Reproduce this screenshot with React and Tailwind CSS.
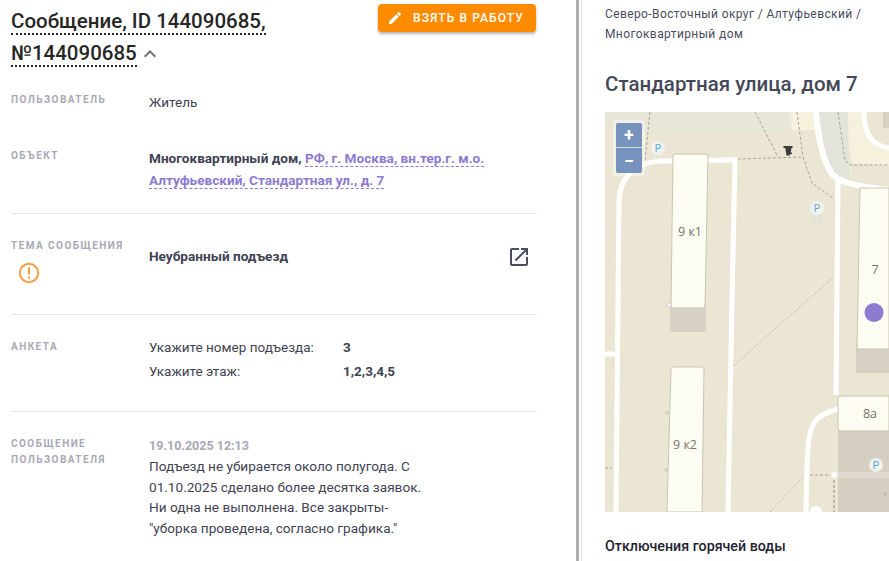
import React from "react";

const Label = ({ children, className = "" }) => (
  <div className={`w-[138px] shrink-0 text-[10px] leading-[16px] font-bold tracking-[0.145em] uppercase text-[#a9a9b6] ${className}`}>{children}</div>
);

const Dash = ({ d, w = 1, c = "#a9a594", da = "3 2" }) => (
  <path d={d} fill="none" stroke={c} strokeWidth={w} strokeDasharray={da} />
);
const Road = ({ d, w = 5 }) => <path d={d} fill="none" stroke="#ffffff" strokeWidth={w} />;
const Parking = ({ x, y }) => (
  <g>
    <circle cx={x} cy={y} r="7" fill="#f2f2ec" />
    <text x={x} y={y + 3.5} textAnchor="middle" fontSize="10" fontFamily="Roboto" fill="#5aa9e6">P</text>
  </g>
);
const Label2 = ({ x, y, children }) => (
  <text x={x} y={y} textAnchor="middle" fontSize="12.5" fontFamily="Open Sans" fill="#77756c">{children}</text>
);

function MapArt() {
  return (
    <svg viewBox="605 112 284 400" className="block w-full h-full">
      <rect x="605" y="112" width="284" height="400" fill="#ebe6d3" />
      <path d="M605 112H790V130H648L605 122Z" fill="#e8e6d9" />
      <path d="M789 112H812L816 130H792Z" fill="#f5f1dd" />
      <path d="M818 112H848L849 178L849 187L838 180L826 160Z" fill="#e3e3dc" />
      <path d="M848 112H862L863 127L873 143L889 148V166L852 163L849 150Z" fill="#f5f1dd" />
      <path d="M883 112H889V128H883Z" fill="#d6d1c0" />
      <rect x="812" y="214" width="10" height="9" fill="#e3e3da" />

      <Road d="M616 512L619 200C620 180 632 163 660 161L735 160L732 300L728 512" w={5} />
      <Road d="M605 354H615" w={5} />
      <Road d="M816 112C817 125 819 137 821 147C824 158 827 167 832 174C838 181 848 185 889 190" w={6} />
      <Road d="M864 112C864 125 866 133 872 140C877 145 882 147 889 148" w={5} />
      <Road d="M838 178L836 395" w={5} />
      <Road d="M838 409C822 414 814 418 811 430C808 440 807 450 806 512" w={5} />

      <Dash d="M650 112L645 160" />
      <Dash d="M755 112L778 157" />
      <Dash d="M797 112L803 157" />
      <Dash d="M803 157L812 183L833 198" />
      <Dash d="M738 159L803 157" />
      <Dash d="M838 112L845 160L850 165H889" />
      <path d="M733 366L835 276" fill="none" stroke="#b5b1a0" strokeWidth="0.8" strokeDasharray="2 1.5" />
      <path d="M770 512L803 477" fill="none" stroke="#b5b1a0" strokeWidth="0.8" strokeDasharray="2 1.5" />
      <Dash d="M605 468H612" />
      <Dash d="M810 475H834" w={1.4} c="#bdb8a6" da="3 2" />
      <Dash d="M834 475V512" w={1.4} c="#a9a594" da="3 2" />

      <rect x="670" y="300" width="36" height="32" rx="2" fill="#d6d1c2" />
      <path d="M673 156Q673 154 675 154H706Q708 154 708 156L705 308H671Z" fill="#fdfcf2" stroke="#c9c4b2" strokeWidth="1" />
      <path d="M671 369Q671 367 673 367H702Q704 367 704 369L702 512H667Z" fill="#fdfcf2" stroke="#c9c4b2" strokeWidth="1" />
      <circle cx="669" cy="305" r="2" fill="#fff" stroke="#bbb" strokeWidth=".6" />
      <circle cx="667" cy="413" r="2" fill="#d6d1c2" />
      <circle cx="666" cy="470" r="2" fill="#d6d1c2" />

      <rect x="856" y="340" width="40" height="33" rx="2" fill="#d6d1c2" />
      <path d="M860 188H889V349H857Z" fill="#fdfcf2" stroke="#c9c4b2" strokeWidth="1" />
      <rect x="838" y="428" width="51" height="84" fill="#d4cfc1" />
      <rect x="838" y="472" width="51" height="6" fill="#dedad0" />
      <path d="M838 399Q838 396 841 396H889V431H841Q838 431 838 428Z" fill="#fdfcf2" stroke="#c9c4b2" strokeWidth="1" />
      <circle cx="834" cy="475" r="3" fill="#ffffff" />
      <circle cx="885" cy="494" r="2" fill="#c4bfae" />
      <path d="M810 512A6 6 0 0 1 822 512Z" fill="#fff" />

      <Label2 x="690" y="236">9 к1</Label2>
      <Label2 x="685" y="449">9 к2</Label2>
      <Label2 x="875" y="274">7</Label2>
      <Label2 x="870" y="418">8а</Label2>

      <Parking x={658} y={148} />
      <Parking x={817} y={208} />
      <Parking x={876} y={465} />

      <path d="M783.5 146H792.5V148H791.5L790.7 152.5H792V154L790 154.3L789.5 155.5H786.5L785.3 148H783.5Z" fill="#3d3d3d" />
      <circle cx="874" cy="312.5" r="9.5" fill="#8d7bd0" />
    </svg>
  );
}

export default function App() {
  return (
    <div className="flex h-[561px] w-[889px] overflow-hidden bg-white font-['Roboto',sans-serif] text-[13.5px] text-[#3f4354]">
      <div className="w-[576px] shrink-0 pl-[11px] pr-[39px]">
        <div className="flex items-start justify-between">
          <h1 className="w-[330px] pt-[5px] text-[20.5px] leading-[32px] font-medium text-[#262626]">
            <span className="border-b-2 border-dotted border-[#262626]">Сообщение, ID 144090685, №144090685</span>
            <svg viewBox="0 0 24 24" className="ml-[1px] inline-block h-6 w-6 align-[-6px] fill-[#6f6f6f]">
              <path d="M7.41 15.41L12 10.83l4.59 4.58L18 14l-6-6-6 6z" />
            </svg>
          </h1>
          <button className="mt-[4px] mr-[1px] flex h-[28px] w-[158px] items-center rounded-[4px] bg-[#ff8c00] pl-[9px] text-[12px] font-medium tracking-[0.09em] text-white shadow-[0_2px_3px_rgba(0,0,0,0.3)]">
            <svg viewBox="0 0 24 24" className="mr-[10px] h-[16px] w-[16px] fill-white">
              <path d="M3 17.25V21h3.75L17.81 9.94l-3.75-3.75L3 17.25zM20.71 7.04c.39-.39.39-1.02 0-1.41l-2.34-2.34c-.39-.39-1.02-.39-1.41 0l-1.83 1.83 3.75 3.75 1.83-1.83z" />
            </svg>
            ВЗЯТЬ В РАБОТУ
          </button>
        </div>

        <div className="mt-[22px] flex h-[56px]">
          <Label className="mt-[1px]">Пользователь</Label>
          <div className="leading-[22px]">Житель</div>
        </div>

        <div className="flex h-[66px]">
          <Label className="mt-[1px]">Объект</Label>
          <div className="w-[350px] text-[13.6px] leading-[22px] font-bold">
            Многоквартирный дом,{" "}
            <span className="border-b border-dashed border-[#8d7bd0] text-[#8d7bd0]">РФ, г. Москва, вн.тер.г. м.о. Алтуфьевский, Стандартная ул., д. 7</span>
          </div>
        </div>

        <div className="flex h-[101px] border-t border-[#e3e3e6] pt-[24px]">
          <div className="w-[138px] shrink-0">
            <Label>Тема сообщения</Label>
            <svg viewBox="0 0 22 22" className="mt-[8px] ml-[7px] h-[22px] w-[22px]">
              <circle cx="11" cy="11" r="9.2" fill="none" stroke="#ff9c3f" strokeWidth="2" />
              <rect x="10" y="5.5" width="2" height="7" fill="#ff9c3f" />
              <rect x="10" y="14.5" width="2" height="2" fill="#ff9c3f" />
            </svg>
          </div>
          <div className="mt-[8px] flex-1 text-[13.6px] leading-[20px] font-bold">Неубранный подъезд</div>
          <svg viewBox="0 0 24 24" className="mt-[7px] mr-[6px] h-6 w-6 fill-[#4a4d5c]">
            <path d="M19 19H5V5h7V3H5c-1.11 0-2 .9-2 2v14c0 1.1.89 2 2 2h14c1.1 0 2-.9 2-2v-7h-2v7zM14 3v2h3.59l-9.83 9.83 1.41 1.41L19 6.41V10h2V3h-7z" />
          </svg>
        </div>

        <div className="flex h-[97px] border-t border-[#e3e3e6] pt-[22px]">
          <Label className="mt-[2px]">Анкета</Label>
          <div className="grid grid-cols-[194px_auto] content-start gap-y-[4px] leading-[20px]">
            <div>Укажите номер подъезда:</div>
            <div className="font-bold">3</div>
            <div>Укажите этаж:</div>
            <div className="font-bold">1,2,3,4,5</div>
          </div>
        </div>

        <div className="flex border-t border-[#e3e3e6] pt-[24px]">
          <Label>Сообщение пользователя</Label>
          <div className="w-[282px]">
            <div className="text-[12.5px] leading-[20px] font-bold text-[#a9a9b6]">19.10.2025 12:13</div>
            <div className="text-[13.6px] leading-[20.5px]">
              Подъезд не убирается около полугода. С 01.10.2025 сделано более десятка заявок. Ни одна не выполнена. Все закрыты- "уборка проведена, согласно графика."
            </div>
          </div>
        </div>
      </div>

      <div className="h-full w-[3px] shrink-0 bg-[#aeaeb4]" />
      <div className="h-full w-[2px] shrink-0 bg-white" />
      <div className="h-full w-px shrink-0 bg-[#e3e3e6]" />

      <div className="min-w-0 flex-1 pl-[23px]">
        <div className="w-[280px] pt-[4px] text-[12px] leading-[20px] tracking-[0.033em] text-[#4a4d5c]">
          Северо-Восточный округ / Алтуфьевский / Многоквартирный дом
        </div>
        <h2 className="mt-[27px] whitespace-nowrap text-[20.5px] leading-[26px] font-medium text-[#454858]">Стандартная улица, дом 7</h2>
        <div className="relative mt-[15px] h-[400px] w-[284px] overflow-hidden">
          <MapArt />
          <div className="absolute left-[8px] top-[8px] w-[32px] rounded-[4px] bg-white/40 p-[3px]">
            <div className="flex h-[25px] items-center justify-center rounded-t-[2px] border-b border-white/70 bg-[#7692bd] text-[18px] leading-none font-bold text-white">+</div>
            <div className="flex h-[25px] items-center justify-center rounded-b-[2px] bg-[#7692bd] text-[18px] leading-none font-bold text-white">−</div>
          </div>
        </div>
        <div className="mt-[25px] whitespace-nowrap text-[14.25px] leading-[18px] font-medium text-[#1f2230]">Отключения горячей воды</div>
      </div>
    </div>
  );
}
